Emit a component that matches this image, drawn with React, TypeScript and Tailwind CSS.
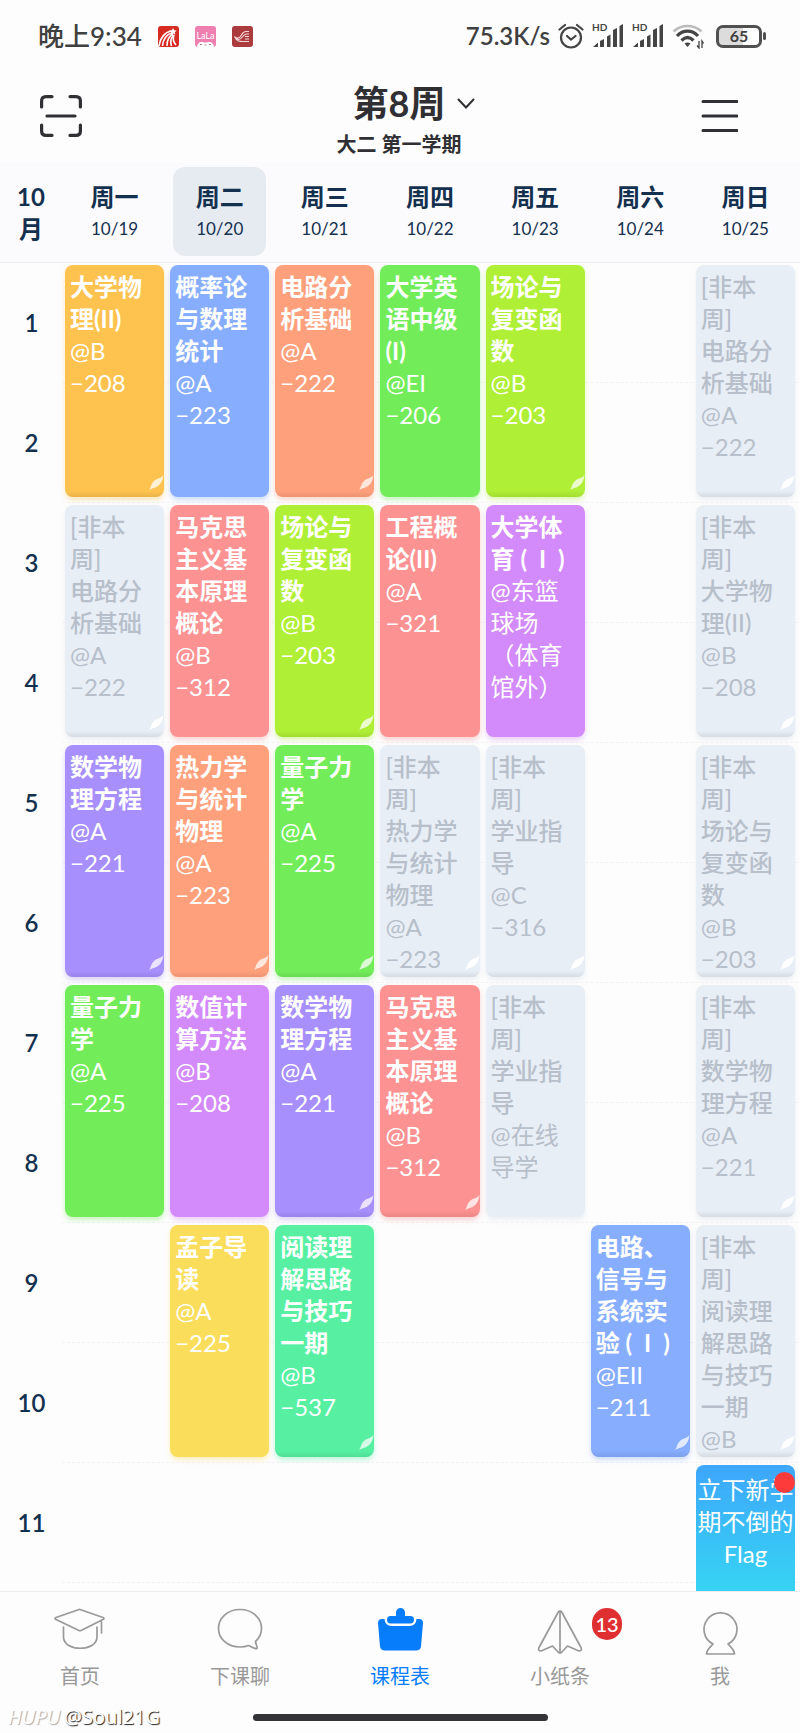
import React from "react";

type Tone =
  | "amber" | "blue" | "coral" | "green" | "lime" | "off" | "rose" | "orchid" | "violet" | "yellow" | "mint";

const tones: Record<Tone, string> = {
  amber: "bg-[#fec24f] text-white shadow-[0_3px_5px_#fec24f60]",
  blue: "bg-[#86adfe] text-white shadow-[0_3px_5px_#86adfe60]",
  coral: "bg-[#ffa07c] text-white shadow-[0_3px_5px_#ffa07c60]",
  green: "bg-[#72ec59] text-white shadow-[0_3px_5px_#72ec5960]",
  lime: "bg-[#afef36] text-white shadow-[0_3px_5px_#afef3660]",
  rose: "bg-[#fd9292] text-white shadow-[0_3px_5px_#fd929260]",
  orchid: "bg-[#d38afb] text-white shadow-[0_3px_5px_#d38afb60]",
  violet: "bg-[#a78ffd] text-white shadow-[0_3px_5px_#a78ffd60]",
  yellow: "bg-[#fadd5b] text-white shadow-[0_3px_5px_#fadd5b60]",
  mint: "bg-[#57f0a3] text-white shadow-[0_3px_5px_#57f0a360]",
  off: "bg-[#e8eef5] text-[#b6bfca] shadow-[0_3px_5px_#d5dbe460]",
};

type Course = { day: number; row: number; tone: Tone; name: string; place: string; fold?: boolean };

const rowStart = ["row-start-1", "row-start-3", "row-start-5", "row-start-7", "row-start-9"];
const colStart = ["col-start-2", "col-start-3", "col-start-4", "col-start-5", "col-start-6", "col-start-7", "col-start-8"];

const courses: Course[] = [
  { day: 0, row: 0, tone: "amber", name: "大学物\n理(II)", place: "@B\n−208", fold: true },
  { day: 1, row: 0, tone: "blue", name: "概率论\n与数理\n统计", place: "@A\n−223" },
  { day: 2, row: 0, tone: "coral", name: "电路分\n析基础", place: "@A\n−222", fold: true },
  { day: 3, row: 0, tone: "green", name: "大学英\n语中级\n(I)", place: "@EI\n−206" },
  { day: 4, row: 0, tone: "lime", name: "场论与\n复变函\n数", place: "@B\n−203", fold: true },
  { day: 6, row: 0, tone: "off", name: "[非本\n周]\n电路分\n析基础", place: "@A\n−222", fold: true },
  { day: 0, row: 1, tone: "off", name: "[非本\n周]\n电路分\n析基础", place: "@A\n−222", fold: true },
  { day: 1, row: 1, tone: "rose", name: "马克思\n主义基\n本原理\n概论", place: "@B\n−312" },
  { day: 2, row: 1, tone: "lime", name: "场论与\n复变函\n数", place: "@B\n−203", fold: true },
  { day: 3, row: 1, tone: "rose", name: "工程概\n论(II)", place: "@A\n−321" },
  { day: 4, row: 1, tone: "orchid", name: "大学体\n育 (\u2002I\u2002)", place: "@东篮\n球场\n（体育\n馆外）" },
  { day: 6, row: 1, tone: "off", name: "[非本\n周]\n大学物\n理(II)", place: "@B\n−208", fold: true },
  { day: 0, row: 2, tone: "violet", name: "数学物\n理方程", place: "@A\n−221", fold: true },
  { day: 1, row: 2, tone: "coral", name: "热力学\n与统计\n物理", place: "@A\n−223", fold: true },
  { day: 2, row: 2, tone: "green", name: "量子力\n学", place: "@A\n−225", fold: true },
  { day: 3, row: 2, tone: "off", name: "[非本\n周]\n热力学\n与统计\n物理", place: "@A\n−223", fold: true },
  { day: 4, row: 2, tone: "off", name: "[非本\n周]\n学业指\n导", place: "@C\n−316", fold: true },
  { day: 6, row: 2, tone: "off", name: "[非本\n周]\n场论与\n复变函\n数", place: "@B\n−203", fold: true },
  { day: 0, row: 3, tone: "green", name: "量子力\n学", place: "@A\n−225" },
  { day: 1, row: 3, tone: "orchid", name: "数值计\n算方法", place: "@B\n−208" },
  { day: 2, row: 3, tone: "violet", name: "数学物\n理方程", place: "@A\n−221", fold: true },
  { day: 3, row: 3, tone: "rose", name: "马克思\n主义基\n本原理\n概论", place: "@B\n−312", fold: true },
  { day: 4, row: 3, tone: "off", name: "[非本\n周]\n学业指\n导", place: "@在线\n导学" },
  { day: 6, row: 3, tone: "off", name: "[非本\n周]\n数学物\n理方程", place: "@A\n−221", fold: true },
  { day: 1, row: 4, tone: "yellow", name: "孟子导\n读", place: "@A\n−225" },
  { day: 2, row: 4, tone: "mint", name: "阅读理\n解思路\n与技巧\n一期", place: "@B\n−537", fold: true },
  { day: 5, row: 4, tone: "blue", name: "电路、\n信号与\n系统实\n验 (\u2002I\u2002)", place: "@EII\n−211", fold: true },
  { day: 6, row: 4, tone: "off", name: "[非本\n周]\n阅读理\n解思路\n与技巧\n一期", place: "@B", fold: true },
];

const days = [
  ["周一", "10/19"],
  ["周二", "10/20"],
  ["周三", "10/21"],
  ["周四", "10/22"],
  ["周五", "10/23"],
  ["周六", "10/24"],
  ["周日", "10/25"],
];

const periods = [1, 2, 3, 4, 5, 6, 7, 8, 9, 10, 11];

function CourseCard({ c }: { c: Course }) {
  const off = c.tone === "off";
  return (
    <article
      className={`relative row-span-2 mx-[3px] mt-[2px] mb-[6px] overflow-hidden rounded-lg pt-[6px] pl-[5px] text-2xl leading-8 whitespace-pre ${tones[c.tone]} ${rowStart[c.row]} ${colStart[c.day]}`}
    >
      <h3 className={off ? "font-medium" : "font-bold"}>{c.name}</h3>
      <p>{c.place}</p>
      {c.fold && (
        <>
          <div className="absolute inset-x-0 bottom-0 h-[6px] bg-linear-to-b from-black/0 to-black/8" />
          <svg className="absolute right-0 bottom-[6px]" width="16" height="16" viewBox="0 0 16 16" aria-hidden="true">
            <path
              d="M1 15C3 13 2.500 9.500 6 6C9 3 13 3.500 15.500 0C15 5 12.500 10 8.500 12C5.500 13.500 4 13 1 15Z"
              fill="#fff"
              fillOpacity={off ? 1 : 0.75}
            />
          </svg>
        </>
      )}
    </article>
  );
}

function Signal() {
  return (
    <svg width="32" height="38" viewBox="0 -6 32 38" fill="#444" aria-hidden="true">
      <text x="0" y="8" fontSize="10" fontWeight="700" fontFamily="Lato">HD</text>
      <path d="M1 24l5-4.500V24zM8 18l4-2v8H8zM15 13.500l3.500-2V24H15zM21 7l4-2v19h-4zM27.500 3L31 1v23h-3.500z" />
    </svg>
  );
}

function StatusBar() {
  return (
    <div className="flex h-[72px] items-center justify-between pr-[34px] pl-[38px] text-2xl font-medium text-[#404040]">
      <div className="flex items-center gap-4">
        <span className="text-[26px]">晚上9:34</span>
        <svg width="21" height="21" viewBox="0 0 21 21" aria-hidden="true">
          <rect width="21" height="21" rx="3" fill="#d62b22" />
          <path d="M1 20C2 12 7 6 13 5M4.500 20C5 13 9 8 14 7M9 20C9 14 11 10 15 8M13.500 20C12 16 13 12 15.500 9M18 19C15 16 15 12 16 9" fill="none" stroke="#fff" strokeWidth="1.600" />
          <path d="M15 2l1.200 2.200 2.500.4-1.800 1.700.4 2.500L15 7.600 12.700 8.800l.4-2.500L11.300 4.600l2.500-.4z" fill="#fff" />
        </svg>
        <svg width="21" height="21" viewBox="0 0 21 21" aria-hidden="true">
          <rect width="21" height="21" rx="3" fill="#ee7fae" />
          <text x="10.500" y="13" fontSize="9" fontWeight="400" fontFamily="Lato" textAnchor="middle" fill="#fff">LaLa</text>
          <path d="M2 21c0-3 2-5 4.500-5 1.500 0 2.500.6 4 .6s2.500-.6 4-.6C17 16 19 18 19 21z" fill="#fff" />
          <path d="M5 18.500h2M9.500 19h2M14 18.500h2" stroke="#b9829c" />
        </svg>
        <svg width="21" height="21" viewBox="0 0 21 21" aria-hidden="true">
          <rect width="21" height="21" rx="3" fill="#ab3b3d" />
          <path d="M17 5.500h-3c-5 0-4 6-8 6.500-2 0-3-.5-3.500-1.500M17 8h-2.500c-4 0-4 5.500-8 5.500-2 0-3-1-4-3M17 10.500h-4M17 13h-4M17 15.500h-4c-4 0-8 1-10.500-5" fill="none" stroke="#f5d9d9" strokeWidth="1.100" />
        </svg>
      </div>
      <div className="flex items-center gap-2">
        <span className="font-semibold">75.3K/s</span>
        <svg width="26" height="26" viewBox="0 0 26 26" fill="none" stroke="#444" strokeWidth="2.200" strokeLinecap="round" aria-hidden="true">
          <circle cx="13" cy="14.500" r="10" />
          <path d="M9 13l4 3.500 4.500-3.500M1.500 6.500L7 2M24.500 6.500L19 2" />
        </svg>
        <Signal />
        <Signal />
        <svg width="32" height="26" viewBox="0 0 32 26" fill="none" strokeWidth="3.200" aria-hidden="true">
          <path d="M1.500 8.500c8-7.500 20-7.500 28 0" stroke="#bbb" strokeWidth="2.500" />
          <path d="M5 13c6-6.500 15-6.500 21 0M9.500 17.500c4-4 8-4 12 0" stroke="#444" />
          <path d="M12.500 20.500c2-1.500 4-1.500 6 0l-3 3.500z" fill="#444" />
          <path d="M27 18v7l-2-2.500M30 25v-7l1.500 2.500" stroke="#444" strokeWidth="1.300" />
        </svg>
        <div className="flex items-center gap-px pl-1">
          <span className="flex h-[23px] w-[46px] items-center justify-center rounded-[7px] border-3 border-[#505050] bg-linear-to-r from-[#dcdcdc] from-60% to-white to-60% text-base font-bold">
            65
          </span>
          <span className="h-2 w-[3px] rounded-full bg-[#505050]" />
        </div>
      </div>
    </div>
  );
}

const tabs = [
  {
    label: "首页",
    icon: (
      <path d="M27 2.500L50 10.500Q52 11.500 50 12.500L28 23.500Q27 24 26 23.500L3 12.500Q1 11.500 3 10.500L26 2.500Q26.500 2.200 27 2.500ZM10.500 20v10c0 15 33.500 15 33.500 0V20M48.500 15v11" />
    ),
  },
  {
    label: "下课聊",
    icon: (
      <path d="M27 2.500C14.500 2.500 5.500 11 5.500 21.500S14.500 40 27 40c3.500 0 6-.5 8.500-1.500 3 1 6 3.500 8.500 3 1-1-1.500-4.500-1.500-7C46.500 31 48.500 26.500 48.500 21.500 48.500 11 39.500 2.500 27 2.500Z" />
    ),
  },
  {
    label: "课程表",
    icon: (
      <g fill="#087dfc" stroke="none">
        <path d="M23 5.500a4.500 4.500 0 0 1 9 0v3.500h5.500q3.500 0 3.500 3.700t-3.500 3.700h-20q-3.500 0-3.500-3.700t3.500-3.700H23z" />
        <path d="M9 12h2.500q.5 7 7 7h18q6.500 0 7-7H46q4 0 4 4l-2 23.500q-.5 4-5 4H12q-4.500 0-5-4L5 16q0-4 4-4z" />
      </g>
    ),
  },
  {
    label: "小纸条",
    icon: (
      <path d="M25 5.500Q27 2 29 5.500L48 40.500Q49.500 44 46 44L34.500 39 28.500 45.500Q27 46.500 25.500 45.500L19.500 39 8 44Q4.500 44 6 40.500ZM27 4v42" />
    ),
    badge: "13",
  },
  {
    label: "我",
    icon: (
      <path d="M20 37a16.500 16.500 0 1 1 15 0c2 2.500 6 5 6.500 10h-28c.5-5 4.500-7.500 6.500-10z" />
    ),
  },
];

export default function App() {
  return (
    <div className="flex h-screen flex-col bg-[#fdfdfd] font-['Lato','Noto_Sans_CJK_SC',sans-serif] text-[#14304f]">
      <StatusBar />
      <header className="flex h-[90px] items-start justify-between px-[40px] text-[#303034]">
        <button aria-label="扫一扫" className="mt-[23px]">
          <svg width="42" height="42" viewBox="0 0 42 42" fill="none" stroke="currentColor" strokeWidth="3.200" strokeLinecap="round">
            <path d="M1.600 12V6q0-4.400 4.400-4.400h6M30 1.600h6q4.400 0 4.400 4.400v6M40.400 30v6q0 4.400-4.400 4.400h-6M12 40.400H6q-4.400 0-4.400-4.400v-6M7 21h28" />
          </svg>
        </button>
        <div className="flex flex-col items-center pl-4">
          <h1 className="relative">
            <button className="text-[36px] leading-[62px] font-bold">
              第8周
              <svg className="absolute top-[26px] left-full ml-3" width="18" height="11" viewBox="0 0 18 11" fill="none" stroke="currentColor" strokeWidth="2" strokeLinecap="round" aria-hidden="true">
                <path d="M1.500 1.500L9 9.500l7.500-8" />
              </svg>
            </button>
          </h1>
          <p className="text-xl leading-5 font-bold">大二 第一学期</p>
        </div>
        <button aria-label="菜单" className="mt-[27px] mr-[22px]">
          <svg width="38" height="34" viewBox="0 0 38 34" stroke="currentColor" strokeWidth="3" strokeLinecap="round">
            <path d="M3 2.500h34M3 17h34M3 31.500h34" />
          </svg>
        </button>
      </header>

      <div className="grid h-[101px] shrink-0 grid-cols-[62px_repeat(7,1fr)] border-b border-[#ececf0] bg-[#fbfbfd] pr-[2px]">
        <div className="pt-[19px] text-center text-2xl leading-8 font-bold">
          10
          <br />月
        </div>
        {days.map(([name, date], i) => (
          <div
            key={name}
            className={`mx-[6px] mt-[5px] mb-[6px] flex flex-col items-center rounded-xl pt-[14px] ${i === 1 ? "bg-[#e6ebf2]" : ""}`}
          >
            <span className="text-2xl leading-8 font-bold">{name}</span>
            <span className="text-[17px] leading-8">{date}</span>
          </div>
        ))}
      </div>

      <main className="min-h-0 flex-1 overflow-y-auto [scrollbar-width:none]">
        <div className="grid auto-rows-[120px] grid-cols-[62px_repeat(7,1fr)] pr-[2px]">
          {periods.map((p) => (
            <React.Fragment key={p}>
              <div style={{ gridRow: p }} className="col-start-1 flex items-center justify-center pl-px text-2xl font-semibold">
                {p}
              </div>
              <div style={{ gridRow: p }} className="col-span-7 col-start-2 border-b border-dashed border-[#f2f2f4]" />
            </React.Fragment>
          ))}
          {courses.map((c) => (
            <CourseCard key={`${c.day}-${c.row}`} c={c} />
          ))}
          <a
            href="#flag"
            className="relative col-start-8 row-span-2 row-start-11 mx-[3px] mt-[2px] mb-[6px] flex justify-center rounded-lg bg-linear-to-b from-[#3ea6fa] to-[#35d8f2] to-60% pt-[9px] text-center text-2xl leading-8 whitespace-pre text-white"
          >
            {"立下新学\n期不倒的\nFlag"}
            <span className="absolute top-[7px] right-0 size-[21px] rounded-full bg-[#fd3b3b]" />
          </a>
        </div>
      </main>

      <footer className="h-[142px] shrink-0 border-t border-[#ececf0] bg-[#fdfdfd]">
        <nav className="grid h-[110px] grid-cols-5">
          {tabs.map((t) => (
            <a
              key={t.label}
              href={`#${t.label}`}
              className={`relative flex flex-col items-center pt-[15px] ${t.label === "课程表" ? "text-[#087dfc]" : "text-[#999]"}`}
            >
              <svg width="54" height="48" viewBox="0 0 54 48" fill="none" stroke="currentColor" strokeWidth="1.700" strokeLinejoin="round" strokeLinecap="round" aria-hidden="true">
                {t.icon}
              </svg>
              <span className="mt-[7px] text-xl leading-7">{t.label}</span>
              {t.badge && (
                <span className="absolute top-4 left-1/2 ml-8 flex h-8 w-[30px] items-center justify-center rounded-full bg-[#e02f31] text-xl font-medium text-white">
                  {t.badge}
                </span>
              )}
            </a>
          ))}
        </nav>
        <div className="grid grid-cols-[1fr_295px_1fr] items-center">
          <div className="flex items-center gap-1 pl-2 font-['Noto_Sans',sans-serif] text-xl leading-[30px]">
            <span className="text-white italic [text-shadow:1px_1px_1px_#aaa]">HUPU</span>
            <span className="text-white [text-shadow:1px_1px_1px_#222]">@Soul21G</span>
          </div>
          <div className="h-[7px] rounded-full bg-[#343438]" />
        </div>
      </footer>
    </div>
  );
}
